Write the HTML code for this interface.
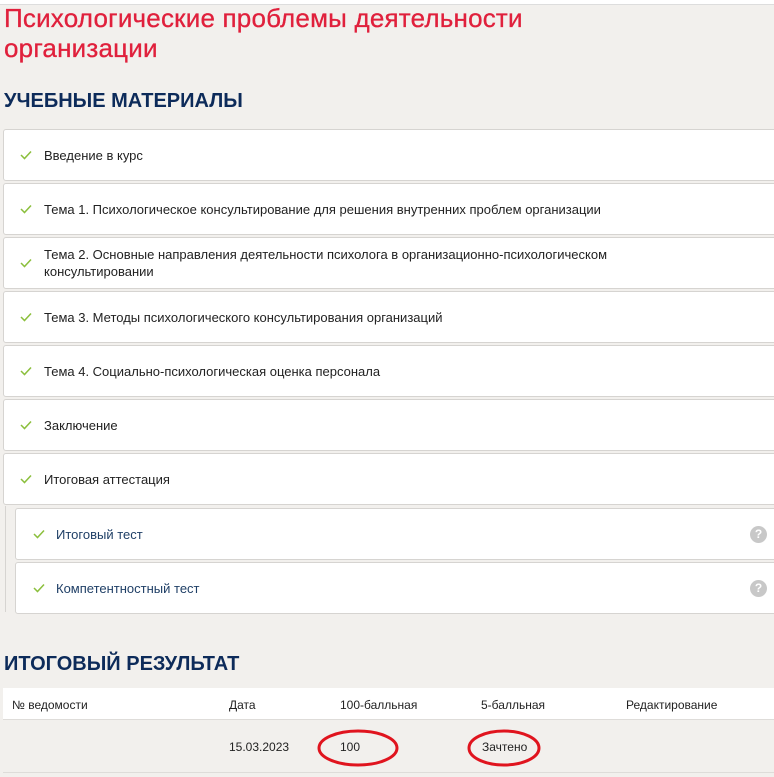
<!DOCTYPE html>
<html><head><meta charset="utf-8"><style>
*{margin:0;padding:0;box-sizing:border-box}
body{width:774px;height:777px;overflow:hidden;background:#f2f0ed;font-family:"Liberation Sans","Noto Sans CJK SC",sans-serif;position:relative}
.top{position:absolute;left:0;top:0;width:774px;height:5px;background:#fff;border-bottom:1px solid #ddd}
h1{position:absolute;left:4px;top:3px;font-size:26px;line-height:30px;font-weight:normal;color:#e0203c;letter-spacing:0.2px;-webkit-text-stroke:0.3px #e0203c}
h2{position:absolute;left:4px;font-size:20px;font-weight:bold;color:#0d2b5a;letter-spacing:0px}
.it{position:absolute;left:3px;width:780px;height:52px;background:#fff;border:1px solid #d6d4d1;border-radius:3px;font-size:13px;color:#222;display:flex;align-items:center;padding-left:40px;line-height:17px}
.it.sub{left:15px;color:#1f3f66}
.ck{position:absolute;left:16px;top:50%;margin-top:-5px;width:12px;height:10px}
.sub .ck{left:17px}
.q{position:absolute;left:734px;top:17px;width:17px;height:17px;border-radius:50%;background:#c8c8c8;color:#fff;font-size:12px;font-weight:bold;text-align:center;line-height:17px}
.vl{position:absolute;left:5px;top:506px;width:1px;height:106px;background:#d6d4d1}
.th{position:absolute;left:3px;top:688px;width:771px;height:32px;background:#fff;border-bottom:1px solid #dedcd9}
.t{position:absolute;font-size:12px;color:#222}
.row{position:absolute;left:3px;top:772px;width:771px;height:1px;background:#dedcd9}
</style></head><body>
<div class="top"></div>
<h1>Психологические проблемы деятельности<br>организации</h1>
<h2 style="top:90px">УЧЕБНЫЕ МАТЕРИАЛЫ</h2>
<div class="it" style="top:129px"><svg class="ck" viewBox="0 0 12 10"><path d="M1 5l3.5 3.5L11 1.5" stroke="#8bbf3c" stroke-width="1.5" fill="none"/></svg>Введение в курс</div>
<div class="it" style="top:183px"><svg class="ck" viewBox="0 0 12 10"><path d="M1 5l3.5 3.5L11 1.5" stroke="#8bbf3c" stroke-width="1.5" fill="none"/></svg>Тема 1. Психологическое консультирование для решения внутренних проблем организации</div>
<div class="it" style="top:237px"><svg class="ck" viewBox="0 0 12 10"><path d="M1 5l3.5 3.5L11 1.5" stroke="#8bbf3c" stroke-width="1.5" fill="none"/></svg>Тема 2. Основные направления деятельности психолога в организационно-психологическом<br>консультировании</div>
<div class="it" style="top:291px"><svg class="ck" viewBox="0 0 12 10"><path d="M1 5l3.5 3.5L11 1.5" stroke="#8bbf3c" stroke-width="1.5" fill="none"/></svg>Тема 3. Методы психологического консультирования организаций</div>
<div class="it" style="top:345px"><svg class="ck" viewBox="0 0 12 10"><path d="M1 5l3.5 3.5L11 1.5" stroke="#8bbf3c" stroke-width="1.5" fill="none"/></svg>Тема 4. Социально-психологическая оценка персонала</div>
<div class="it" style="top:399px"><svg class="ck" viewBox="0 0 12 10"><path d="M1 5l3.5 3.5L11 1.5" stroke="#8bbf3c" stroke-width="1.5" fill="none"/></svg>Заключение</div>
<div class="it" style="top:453px"><svg class="ck" viewBox="0 0 12 10"><path d="M1 5l3.5 3.5L11 1.5" stroke="#8bbf3c" stroke-width="1.5" fill="none"/></svg>Итоговая аттестация</div>
<div class="vl"></div>
<div class="it sub" style="top:508px"><svg class="ck" viewBox="0 0 12 10"><path d="M1 5l3.5 3.5L11 1.5" stroke="#8bbf3c" stroke-width="1.5" fill="none"/></svg>Итоговый тест<div class="q">?</div></div>
<div class="it sub" style="top:562px"><svg class="ck" viewBox="0 0 12 10"><path d="M1 5l3.5 3.5L11 1.5" stroke="#8bbf3c" stroke-width="1.5" fill="none"/></svg>Компетентностный тест<div class="q">?</div></div>
<h2 style="top:653px">ИТОГОВЫЙ РЕЗУЛЬТАТ</h2>
<div class="th"></div>
<div class="t" style="left:12px;top:698px">№ ведомости</div>
<div class="t" style="left:229px;top:698px">Дата</div>
<div class="t" style="left:340px;top:698px">100-балльная</div>
<div class="t" style="left:481px;top:698px">5-балльная</div>
<div class="t" style="left:626px;top:698px">Редактирование</div>
<div class="t" style="left:229px;top:740px">15.03.2023</div>
<div class="t" style="left:340px;top:740px">100</div>
<div class="t" style="left:482px;top:740px">Зачтено</div>
<div class="row"></div>
<svg style="position:absolute;left:0;top:0" width="774" height="777"><ellipse cx="358" cy="748" rx="39" ry="17" fill="none" stroke="#e0141e" stroke-width="3"/><ellipse cx="504" cy="748" rx="35" ry="17" fill="none" stroke="#e0141e" stroke-width="3"/></svg>
</body></html>
